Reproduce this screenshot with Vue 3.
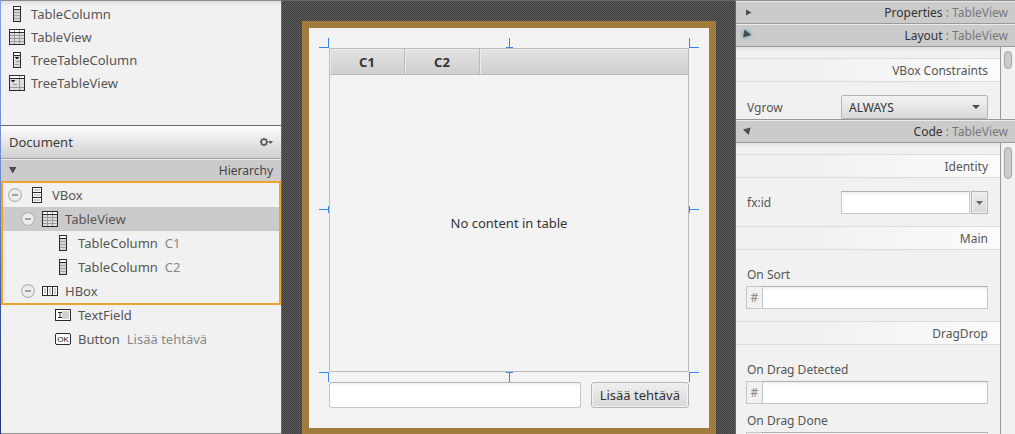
<script setup>
import { ref } from 'vue'

const library = [
  { icon: 'column', name: 'TableColumn' },
  { icon: 'table', name: 'TableView' },
  { icon: 'treecolumn', name: 'TreeTableColumn' },
  { icon: 'treetable', name: 'TreeTableView' }
]

const hierarchy = [
  { id: 1, depth: 0, icon: 'vbox', name: 'VBox', branch: true },
  { id: 2, depth: 1, icon: 'table', name: 'TableView', branch: true },
  { id: 3, depth: 2, icon: 'column', name: 'TableColumn', info: 'C1' },
  { id: 4, depth: 2, icon: 'column', name: 'TableColumn', info: 'C2' },
  { id: 5, depth: 1, icon: 'hbox', name: 'HBox', branch: true },
  { id: 6, depth: 2, icon: 'textfield', name: 'TextField' },
  { id: 7, depth: 2, icon: 'button', name: 'Button', info: 'Lisää tehtävä' }
]

const icons = {
  column: [
    ['#2b2b2b', 'M4 0h8v16H4z'],
    ['#ffffff', 'M5 1h6v2H5z'],
    ['#d4d4d4', 'M5 4h6v11H5z'],
    ['#a2a2a2', 'M5 6h6v1H5zM5 9h6v1H5zM5 12h6v1H5z']
  ],
  table: [
    ['#2b2b2b', 'M0 0h16v16H0z'],
    ['#ffffff', 'M1 1h14v2H1z'],
    ['#dedede', 'M1 4h14v11H1z'],
    ['#999999', 'M1 6h14v1H1zM1 9h14v1H1zM1 12h14v1H1zM5 1h1v14H5zM10 1h1v14h-1z'],
    ['#2b2b2b', 'M0 3h16v1H0z']
  ],
  treecolumn: [
    ['#2b2b2b', 'M4 0h8v16H4z'],
    ['#ffffff', 'M5 1h6v2H5z'],
    ['#dcdcdc', 'M5 4h6v11H5z'],
    ['#222222', 'M6 5h4v1H9v1H7V6H6z'],
    ['#999999', 'M7 9h4v1H7zM6 12h4v1H6z']
  ],
  treetable: [
    ['#2b2b2b', 'M0 0h16v16H0z'],
    ['#ffffff', 'M1 1h14v2H1z'],
    ['#dedede', 'M1 4h14v11H1z'],
    ['#999999', 'M10 1h1v14h-1zM1 12h14v1H1zM4 9h4v1H4z'],
    ['#2b2b2b', 'M0 3h16v1H0zM2 5h4v1H5v1H3V6H2z']
  ],
  vbox: [
    ['#2b2b2b', 'M3 0h10v16H3z'],
    ['#ffffff', 'M4 1h8v4H4zM4 6h8v4H4zM4 11h8v4H4z'],
    ['#d0d0d0', 'M5 2h6v2H5zM5 7h6v2H5zM5 12h6v2H5z']
  ],
  hbox: [
    ['#2b2b2b', 'M0 3h16v10H0z'],
    ['#ffffff', 'M1 4h4v8H1zM6 4h4v8H6zM11 4h4v8h-4z'],
    ['#d0d0d0', 'M2 5h2v6H2zM7 5h2v6H7zM12 5h2v6h-2z']
  ],
  textfield: [
    ['#2b2b2b', 'M0 2h16v12H0z'],
    ['#ffffff', 'M1 3h14v10H1z'],
    ['#d0d0d0', 'M7 4h7v8H7z'],
    ['#2b2b2b', 'M3 5h4v1H5.5v4H7v1H3v-1h1.5V6H3z']
  ],
  button: []
}

const handles = ['nw', 'n', 'ne', 'w', 'e', 'sw', 's', 'se']
const selected = ref(2)
const task = ref('')
const vgrow = ref('ALWAYS')
const fxid = ref('')
const onSort = ref('')
const onDetected = ref('')
const onDone = ref('')
</script>

<template>
  <div class="app">
    <aside class="left">
      <ul class="library">
        <li v-for="item in library" :key="item.name">
          <svg class="icon" viewBox="0 0 16 16" aria-hidden="true">
            <path v-for="(p, i) in icons[item.icon]" :key="i" :fill="p[0]" :d="p[1]" />
          </svg>
          <span>{{ item.name }}</span>
        </li>
      </ul>

      <header class="document">
        <h2>Document</h2>
        <button class="gear" aria-label="Document menu">
          <svg width="14" height="10" viewBox="0 0 14 10">
            <circle cx="5" cy="5" r="2.7" fill="none" stroke="#5a5a5a" stroke-width="1.5" />
            <path d="M5 .8v1.600M5 7.600v1.600M.8 5h1.600M7.600 5h1.600M2 2l1 1M7 7l1 1M8 2L7 3M3 7L2 8" stroke="#5a5a5a" stroke-width="1.400" />
            <path d="M9 4h5l-2.500 3z" fill="#5a5a5a" />
          </svg>
        </button>
      </header>

      <button class="bar hierarchy-bar" aria-expanded="true">
        <svg width="8" height="7" viewBox="0 0 8 7"><path d="M0 0h7.500L3.750 6.500z" fill="#4c4c4c" /></svg>
        <span>Hierarchy</span>
      </button>

      <ul class="tree">
        <li
          v-for="node in hierarchy"
          :key="node.id"
          :class="['node', 'depth-' + node.depth, { selected: node.id === selected }]"
          @click="selected = node.id"
        >
          <button v-if="node.branch" class="toggle" :aria-label="'Collapse ' + node.name">
            <svg width="14" height="14" viewBox="0 0 14 14">
              <circle cx="7" cy="7" r="6.4" fill="#ececec" stroke="#b4b4b4" stroke-width="1.1" />
              <path d="M4 6h6v2H4z" fill="#a2a2a2" />
            </svg>
          </button>
          <span v-else class="toggle"></span>
          <svg class="icon" viewBox="0 0 16 16" aria-hidden="true">
            <path v-for="(p, i) in icons[node.icon]" :key="i" :fill="p[0]" :d="p[1]" />
            <g v-if="node.icon === 'button'">
              <rect x=".5" y="2.5" width="15" height="11" rx="1.5" fill="#fff" stroke="#2b2b2b" />
              <text x="8" y="11" text-anchor="middle" class="ok">OK</text>
            </g>
          </svg>
          <span>{{ node.name }}</span>
          <span v-if="node.info" class="info">{{ node.info }}</span>
        </li>
        <li class="drop-frame" aria-hidden="true"></li>
      </ul>
      <div class="left-foot"></div>
    </aside>

    <main class="canvas">
      <div class="stage">
        <div class="vbox">
          <div class="table-holder">
            <table>
              <thead>
                <tr>
                  <th class="col">C1</th>
                  <th class="col">C2</th>
                  <th></th>
                </tr>
              </thead>
              <tbody>
                <tr>
                  <td colspan="3">No content in table</td>
                </tr>
              </tbody>
            </table>
            <i v-for="h in handles" :key="h" :class="['handle', h]"></i>
          </div>
          <div class="hbox">
            <input v-model="task" type="text" aria-label="Tehtävä" />
            <button>Lisää tehtävä</button>
          </div>
        </div>
      </div>
    </main>

    <aside class="right">
      <button class="bar" aria-expanded="false">
        <svg width="14" height="14" viewBox="0 0 14 14"><path d="M5 3.500L10.500 6.500L5 9.500z" fill="#4c4c4c" /></svg>
        <span>Properties <em>: TableView</em></span>
      </button>
      <button class="bar focus" aria-expanded="true">
        <svg width="14" height="14" viewBox="0 0 14 14"><path d="M2 8.500L3.500 .500L10.500 6z" fill="#4c4c4c" /></svg>
        <span>Layout <em>: TableView</em></span>
      </button>
      <section class="pane layout-pane">
        <div class="fields">
          <h3>VBox Constraints</h3>
          <div class="field vgrow">
            <label for="vgrow">Vgrow</label>
            <div class="combo">
              <select id="vgrow" v-model="vgrow">
                <option>ALWAYS</option>
                <option>SOMETIMES</option>
                <option>NEVER</option>
              </select>
              <svg width="8" height="4" viewBox="0 0 8 4"><path d="M0 0h8L4 4z" fill="#4a4a4a" /></svg>
            </div>
          </div>
        </div>
        <div class="scroll"><div class="thumb"></div></div>
      </section>
      <button class="bar" aria-expanded="true">
        <svg width="14" height="14" viewBox="0 0 14 14"><path d="M2 4.500L9.500 2.500L7.800 10z" fill="#4c4c4c" /></svg>
        <span>Code <em>: TableView</em></span>
      </button>
      <section class="pane code-pane">
        <div class="fields">
          <h3>Identity</h3>
          <div class="field fxid">
            <label for="fxid">fx:id</label>
            <div class="pair">
              <input id="fxid" v-model="fxid" type="text" />
              <button aria-label="Choose fx:id">
                <svg width="7" height="4" viewBox="0 0 7 4"><path d="M0 0h7L3.500 4z" fill="#666" /></svg>
              </button>
            </div>
          </div>
          <h3>Main</h3>
          <div class="event">
            <label for="sort">On Sort</label>
            <div class="method"><span>#</span><input id="sort" v-model="onSort" type="text" /></div>
          </div>
          <h3>DragDrop</h3>
          <div class="event">
            <label for="detected">On Drag Detected</label>
            <div class="method"><span>#</span><input id="detected" v-model="onDetected" type="text" /></div>
          </div>
          <div class="event next">
            <label for="done">On Drag Done</label>
            <div class="method"><span></span><input id="done" v-model="onDone" type="text" /></div>
          </div>
        </div>
        <div class="scroll"><div class="thumb long"></div></div>
      </section>
    </aside>
  </div>
</template>

<style>
body {
  background: #f1f1f1;
}
</style>

<style scoped>
* {
  box-sizing: border-box;
}
.app {
  display: grid;
  grid-template-columns: 281px minmax(0, 1fr) 279px;
  height: 100vh;
  overflow: hidden;
  font-family: "Noto Sans", "Open Sans", sans-serif;
  font-size: 13px;
  color: #555;
  background: #f1f1f1;
}
button,
input,
select {
  font: inherit;
  color: inherit;
  margin: 0;
  padding: 0;
}
button,
select {
  border: 0;
  background: none;
}
ul,
h2,
h3 {
  margin: 0;
  padding: 0;
  list-style: none;
  font-size: inherit;
  font-weight: normal;
}
svg {
  display: block;
  flex: none;
}
.icon {
  width: 16px;
  height: 16px;
}

.left {
  display: flex;
  flex-direction: column;
  min-height: 0;
  border-left: 1px solid;
  border-image: linear-gradient(#84a0e4, #6d86cc 45%, #3c56a0 70%, #1f3468) 1;
}
.library {
  flex: none;
  height: 126px;
  padding: 1px 8px;
  border-top: 1px solid #8f8b8e;
  border-bottom: 1px solid #6a6a6a;
  background: linear-gradient(#dedede, #f1f1f1 5px);
}
.library li {
  display: flex;
  align-items: center;
  gap: 6px;
  height: 23px;
}
.document {
  flex: none;
  display: flex;
  align-items: center;
  justify-content: space-between;
  height: 33px;
  padding: 0 8px;
  border-bottom: 1px solid #a0a0a0;
  background: linear-gradient(#fdfdfd, #cfcfcf);
  color: #3c3c3c;
}
.bar {
  flex: none;
  display: flex;
  align-items: center;
  justify-content: space-between;
  width: 100%;
  height: 23px;
  padding: 0 7px 0 5px;
  border-top: 1px solid #ececec;
  border-bottom: 1px solid #999;
  background: #cbcbcb;
  font-size: 12px;
  color: #333;
}
.bar em {
  font-style: normal;
  color: #777;
}
.hierarchy-bar {
  padding: 0 8px;
  color: #444;
}
.tree {
  position: relative;
  flex: 1;
  padding-top: 1px;
}
.node {
  display: flex;
  align-items: center;
  gap: 7px;
  height: 24px;
  padding-left: 7px;
}
.depth-1 {
  padding-left: 20px;
}
.depth-2 {
  padding-left: 33px;
}
.selected {
  background: #cbcbcb;
}
.toggle {
  flex: none;
  width: 14px;
  height: 14px;
}
.info {
  color: #888;
}
.ok {
  font: 8px "Liberation Sans", sans-serif;
  fill: #111;
}
.drop-frame {
  position: absolute;
  inset: -1px 0 auto 0;
  height: 124px;
  border: 2px solid #eba42c;
  pointer-events: none;
}
.left-foot {
  flex: none;
  height: 2px;
  border-top: 1px solid #999;
  background: #fff;
}

.canvas {
  min-width: 0;
  padding: 20px 19px 0 20px;
  border: solid #686868;
  border-width: 1px 1px 0 1px;
  background: repeating-conic-gradient(#3c3c3c 0 25%, #5e5e5e 0 50%) 0 0 / 2px 2px;
}
.stage {
  padding: 7px;
  background: repeating-conic-gradient(#977237 0 25%, #a98446 0 50%) 0 0 / 2px 2px;
}
.vbox {
  display: flex;
  flex-direction: column;
  gap: 10px;
  padding: 20px;
  background: #f3f3f3;
  color: #333;
}
.table-holder {
  position: relative;
}
table {
  width: 100%;
  table-layout: fixed;
  border-collapse: separate;
  border-spacing: 0;
  border: 1px solid #bcbcbc;
}
th {
  height: 26px;
  padding: 0;
  border-right: 1px solid #bcbcbc;
  border-bottom: 1px solid #bcbcbc;
  background: linear-gradient(#e3e3e3, #cfcfcf);
  box-shadow: inset 1px 1px #ececec;
}
th:last-child {
  border-right: 0;
}
.col {
  width: 75px;
}
td {
  height: 296px;
  padding: 0;
  text-align: center;
}
.handle {
  position: absolute;
  width: 10px;
  height: 10px;
  border: 0 solid #2f86f6;
}
.nw {
  top: -10px;
  left: -10px;
  border-width: 0 1px 1px 0;
}
.ne {
  top: -10px;
  right: -10px;
  border-width: 0 0 1px 1px;
}
.sw {
  bottom: -10px;
  left: -10px;
  border-width: 1px 1px 0 0;
}
.se {
  bottom: -10px;
  right: -10px;
  border-width: 1px 0 0 1px;
}
.n,
.s {
  left: calc(50% - 3px);
  width: 7px;
  background: linear-gradient(#2f86f6, #2f86f6) center / 1px 100% no-repeat;
}
.w,
.e {
  top: calc(50% - 4px);
  height: 7px;
  background: linear-gradient(#2f86f6, #2f86f6) center / 100% 1px no-repeat;
}
.n {
  top: -10px;
  border-bottom-width: 1px;
}
.s {
  bottom: -10px;
  border-top-width: 1px;
}
.w {
  left: -10px;
  border-right-width: 1px;
}
.e {
  right: -10px;
  border-left-width: 1px;
}
.hbox {
  display: flex;
  gap: 10px;
}
.hbox input {
  flex: 1;
  min-width: 0;
  height: 26px;
  padding: 0 7px;
  border: 1px solid #c6c6c6;
  border-top-color: #b4b4b4;
  border-radius: 3px;
  background: linear-gradient(#f0f0f0, #fff 4px);
}
.hbox button {
  height: 26px;
  padding: 0 8px;
  border: 1px solid #b5b5b5;
  border-radius: 3px;
  background: linear-gradient(#f0f0f0, #d8d8d8);
  box-shadow: inset 0 0 0 1px #f3f3f3;
}

.right {
  display: flex;
  flex-direction: column;
  min-height: 0;
  border-top: 1px solid #8f8f8f;
  font-size: 12px;
}
.focus svg {
  overflow: visible;
  filter: drop-shadow(0 0 2px #28a9d6);
}
.pane {
  display: flex;
  min-height: 0;
  overflow: hidden;
}
.layout-pane {
  flex: none;
  height: 73px;
  border-bottom: 1px solid #999;
}
.code-pane {
  flex: 1;
}
.fields {
  flex: 1;
  min-width: 0;
  padding-top: 11px;
  background: linear-gradient(#e2e2e2, #f1f1f1 4px);
}
.scroll {
  flex: none;
  width: 15px;
  padding: 4px 3px;
  border-left: 1px solid #999;
}
.thumb {
  width: 8px;
  height: 18px;
  border: 1px solid #a3a3a3;
  border-radius: 4px;
  background: #cbcbcb;
}
.thumb.long {
  height: 32px;
}
h3 {
  height: 24px;
  padding-right: 12px;
  border: solid #dcdcdc;
  border-width: 1px 0;
  background: linear-gradient(90deg, #f1f1f1 30%, #fbfbfb);
  line-height: 24px;
  text-align: right;
}
.field {
  display: grid;
  grid-template-columns: 94px minmax(0, 1fr);
  align-items: center;
  padding: 13px 12px 12px 11px;
}
.combo {
  display: grid;
  align-items: center;
}
.combo select {
  grid-area: 1 / 1;
  width: 100%;
  height: 24px;
  padding-left: 7px;
  border: 1px solid #b5b5b5;
  border-radius: 2px;
  appearance: none;
  background: linear-gradient(#f2f2f2, #dadada);
  color: #333;
}
.combo svg {
  grid-area: 1 / 1;
  justify-self: end;
  margin-right: 8px;
  pointer-events: none;
}
.pair {
  display: flex;
  gap: 1px;
}
.pair input,
.method input {
  flex: 1;
  min-width: 0;
  height: 23px;
  padding: 0 5px;
  border: 1px solid #c6c6c6;
  border-top-color: #b0b0b0;
  border-radius: 0;
  background: linear-gradient(#f0f0f0, #fff 4px);
}
.pair button {
  display: grid;
  place-items: center;
  width: 17px;
  height: 23px;
  border: 1px solid #b5b5b5;
  background: linear-gradient(#ececec, #d8d8d8);
  box-shadow: inset 0 0 0 1px #f0f0f0;
}
.event {
  display: flex;
  flex-direction: column;
  gap: 3px;
  padding: 17px 12px 12px 10px;
}
.event label {
  height: 16px;
  padding-left: 1px;
  line-height: 16px;
}
.event.next {
  margin-top: -3px;
  padding-top: 0;
}
.method {
  display: flex;
}
.method span {
  width: 16px;
  height: 23px;
  border: 1px solid #c6c6c6;
  border-right: 0;
  line-height: 21px;
  text-align: center;
  color: #888;
}
</style>
